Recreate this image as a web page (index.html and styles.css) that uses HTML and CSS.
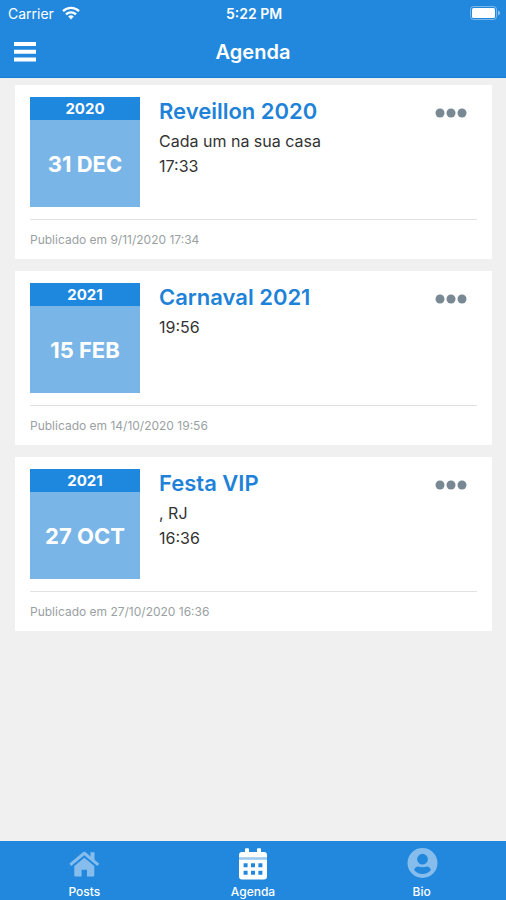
FILE: index.html
```html
<!DOCTYPE html>
<html lang="pt-BR">
<head>
<meta charset="utf-8">
<meta name="viewport" content="width=device-width, initial-scale=1">
<title>Agenda</title>
<link rel="stylesheet" href="styles.css">
</head>
<body>
<header class="top">
  <div class="status">
    <div class="carrier">
      <span>Carrier</span>
      <svg class="wifi" viewBox="0 0 18 14" aria-hidden="true">
        <path d="M1 5.200a11.500 11.500 0 0 1 16 0M4 8.300a7.200 7.200 0 0 1 10 0" fill="none" stroke="currentColor" stroke-width="2.300"/>
        <path d="M6.200 10.600a4 4 0 0 1 5.600 0L9 13.400z" fill="currentColor"/>
      </svg>
    </div>
    <span class="clock">5:22 PM</span>
    <svg class="battery" viewBox="0 0 30 14" aria-hidden="true">
      <rect x=".5" y=".5" width="26" height="13" rx="3" fill="none" stroke="currentColor" opacity=".4"/>
      <rect x="2" y="2" width="23" height="10" rx="1.500" fill="currentColor"/>
      <path d="M28 4.500v5q2-.8 2-2.500t-2-2.500" fill="currentColor" opacity=".5"/>
    </svg>
  </div>
  <div class="nav">
    <button class="menu" type="button" aria-label="Menu">
      <svg viewBox="0 0 22 20" aria-hidden="true"><path d="M0 2h22M0 9.800h22M0 17.600h22" stroke="currentColor" stroke-width="4"/></svg>
    </button>
    <h1 class="title">Agenda</h1>
  </div>
</header>

<main class="list">
  <article class="card">
    <div class="event">
      <div class="date"><div class="year">2020</div><div class="day">31 DEC</div></div>
      <div class="info">
        <h2 class="name">Reveillon 2020</h2>
        <p class="detail">Cada um na sua casa</p>
        <p class="detail">17:33</p>
      </div>
      <button class="more" type="button" aria-label="Mais opções">
        <svg viewBox="0 0 32 10" aria-hidden="true"><circle cx="5" cy="5" r="4.500"/><circle cx="16" cy="5" r="4.500"/><circle cx="27" cy="5" r="4.500"/></svg>
      </button>
    </div>
    <p class="published">Publicado em 9/11/2020 17:34</p>
  </article>

  <article class="card">
    <div class="event">
      <div class="date"><div class="year">2021</div><div class="day">15 FEB</div></div>
      <div class="info">
        <h2 class="name">Carnaval 2021</h2>
        <p class="detail">19:56</p>
      </div>
      <button class="more" type="button" aria-label="Mais opções">
        <svg viewBox="0 0 32 10" aria-hidden="true"><circle cx="5" cy="5" r="4.500"/><circle cx="16" cy="5" r="4.500"/><circle cx="27" cy="5" r="4.500"/></svg>
      </button>
    </div>
    <p class="published">Publicado em 14/10/2020 19:56</p>
  </article>

  <article class="card">
    <div class="event">
      <div class="date"><div class="year">2021</div><div class="day">27 OCT</div></div>
      <div class="info">
        <h2 class="name">Festa VIP</h2>
        <p class="detail">, RJ</p>
        <p class="detail">16:36</p>
      </div>
      <button class="more" type="button" aria-label="Mais opções">
        <svg viewBox="0 0 32 10" aria-hidden="true"><circle cx="5" cy="5" r="4.500"/><circle cx="16" cy="5" r="4.500"/><circle cx="27" cy="5" r="4.500"/></svg>
      </button>
    </div>
    <p class="published">Publicado em 27/10/2020 16:36</p>
  </article>
</main>

<nav class="tabs">
  <a class="tab" href="#posts">
    <svg class="icon dim" viewBox="0 0 32 32" fill="currentColor" aria-hidden="true">
      <path d="M1.300 15.800 14.900 4.300q1.400-1.100 2.800 0L22.500 8.400V4.200h4v7.600L31.300 15.800l-1.900 2.300L16.300 7.200 3.200 18.100z"/>
      <path d="M16.300 9.700 26.300 18v9.500q0 1-1 1H19v-6.700h-5.400v6.700H7.300q-1 0-1-1V18z"/>
    </svg>
    <span>Posts</span>
  </a>
  <a class="tab" href="#agenda" aria-current="page">
    <svg class="icon" viewBox="0 0 32 32" fill="currentColor" aria-hidden="true">
      <path d="M5 4h3V1.200q0-1 1-1h2q1 0 1 1V4h8V1.200q0-1 1-1h2q1 0 1 1V4h3q3 0 3 3v2.500H2V7q0-3 3-3z"/>
      <path d="M2 9.500h28v2H2z" opacity=".55"/>
      <path fill-rule="evenodd" d="M2 11.500h28v17q0 3-3 3H5q-3 0-3-3zM6.600 15.300v4h4v-4zm7.400 0v4h4v-4zm7.400 0v4h4v-4zM6.600 22.700v4h4v-4zm7.400 0v4h4v-4zm7.400 0v4h4v-4z"/>
    </svg>
    <span>Agenda</span>
  </a>
  <a class="tab" href="#bio">
    <svg class="icon dim" viewBox="0 0 32 32" fill="currentColor" aria-hidden="true">
      <path fill-rule="evenodd" d="M16.500 0a15 15 0 1 0 0 30a15 15 0 0 0 0-30zM16.500 5.800a5.400 5.400 0 1 1 0 10.800a5.400 5.400 0 0 1 0-10.800zM12.100 18.400q2 .8 4.400.8t4.400-.8q3 .2 4 3.600-3.200 4-8.400 4t-8.400-4q1-3.400 4-3.600z"/>
    </svg>
    <span>Bio</span>
  </a>
</nav>
</body>
</html>
```
FILE: styles.css
```css
* {
  box-sizing: border-box;
}

body {
  margin: 0;
  min-height: 100vh;
  display: flex;
  flex-direction: column;
  background: #f0f0f0;
  color: #333;
  font-family: Inter, "Liberation Sans", sans-serif;
}

h1, h2, p {
  margin: 0;
}

button {
  border: 0;
  padding: 0;
  background: none;
  color: inherit;
  font: inherit;
}

svg {
  display: block;
}

.top {
  background: #2288dd;
  color: #fff;
  border-bottom: 1px solid #1b7dd3;
}

.status,
.nav {
  display: grid;
  grid-template-columns: 1fr auto 1fr;
  align-items: center;
}

.status {
  height: 26px;
  padding: 0 6px 0 8px;
  font-size: 14px;
}

.carrier {
  display: flex;
  align-items: center;
  gap: 8px;
}

.wifi {
  width: 18px;
  height: 14px;
}

.clock {
  font-weight: 600;
}

.battery {
  width: 30px;
  height: 14px;
  justify-self: end;
}

.nav {
  height: 51px;
  padding: 0 14px;
}

.menu {
  justify-self: start;
}

.menu svg {
  width: 22px;
  height: 20px;
}

.title {
  font-size: 20px;
  line-height: 24px;
  font-weight: 600;
}

.list {
  flex: 1;
  display: flex;
  flex-direction: column;
  gap: 12px;
  padding: 7px 14px 12px 15px;
}

.card {
  padding: 12px 15px 9px;
  background: #fff;
}

.event {
  display: flex;
  padding-bottom: 12px;
  border-bottom: 1px solid #e2e2e2;
}

.date {
  width: 110px;
  height: 110px;
  display: flex;
  flex-direction: column;
  background: #7ab5e8;
  color: #fff;
  text-align: center;
}

.year {
  background: #1e87de;
  font-size: 15px;
  line-height: 23px;
  font-weight: 700;
}

.day {
  flex: 1;
  display: grid;
  place-items: center;
  font-size: 22px;
  font-weight: 700;
}

.info {
  flex: 1;
  padding-left: 19px;
}

.name {
  margin-bottom: 4px;
  color: #1e83d8;
  font-size: 22px;
  line-height: 28px;
  font-weight: 600;
}

.detail {
  font-size: 16px;
  line-height: 25px;
}

.more {
  align-self: flex-start;
  margin: 11px 10px 0 0;
  color: #788993;
}

.more svg {
  width: 32px;
  height: 10px;
  fill: currentColor;
}

.published {
  padding-top: 10px;
  color: #9a9fa3;
  font-size: 12px;
  line-height: 20px;
}

.tabs {
  display: grid;
  grid-template-columns: repeat(3, 1fr);
  height: 59px;
  background: #2288dd;
}

.tab {
  display: flex;
  flex-direction: column;
  align-items: center;
  gap: 5px;
  padding-top: 7px;
  color: #fff;
  font-size: 12px;
  line-height: 14px;
  font-weight: 500;
  text-decoration: none;
}

.icon {
  width: 32px;
  height: 32px;
}

.dim {
  opacity: .45;
}
```
